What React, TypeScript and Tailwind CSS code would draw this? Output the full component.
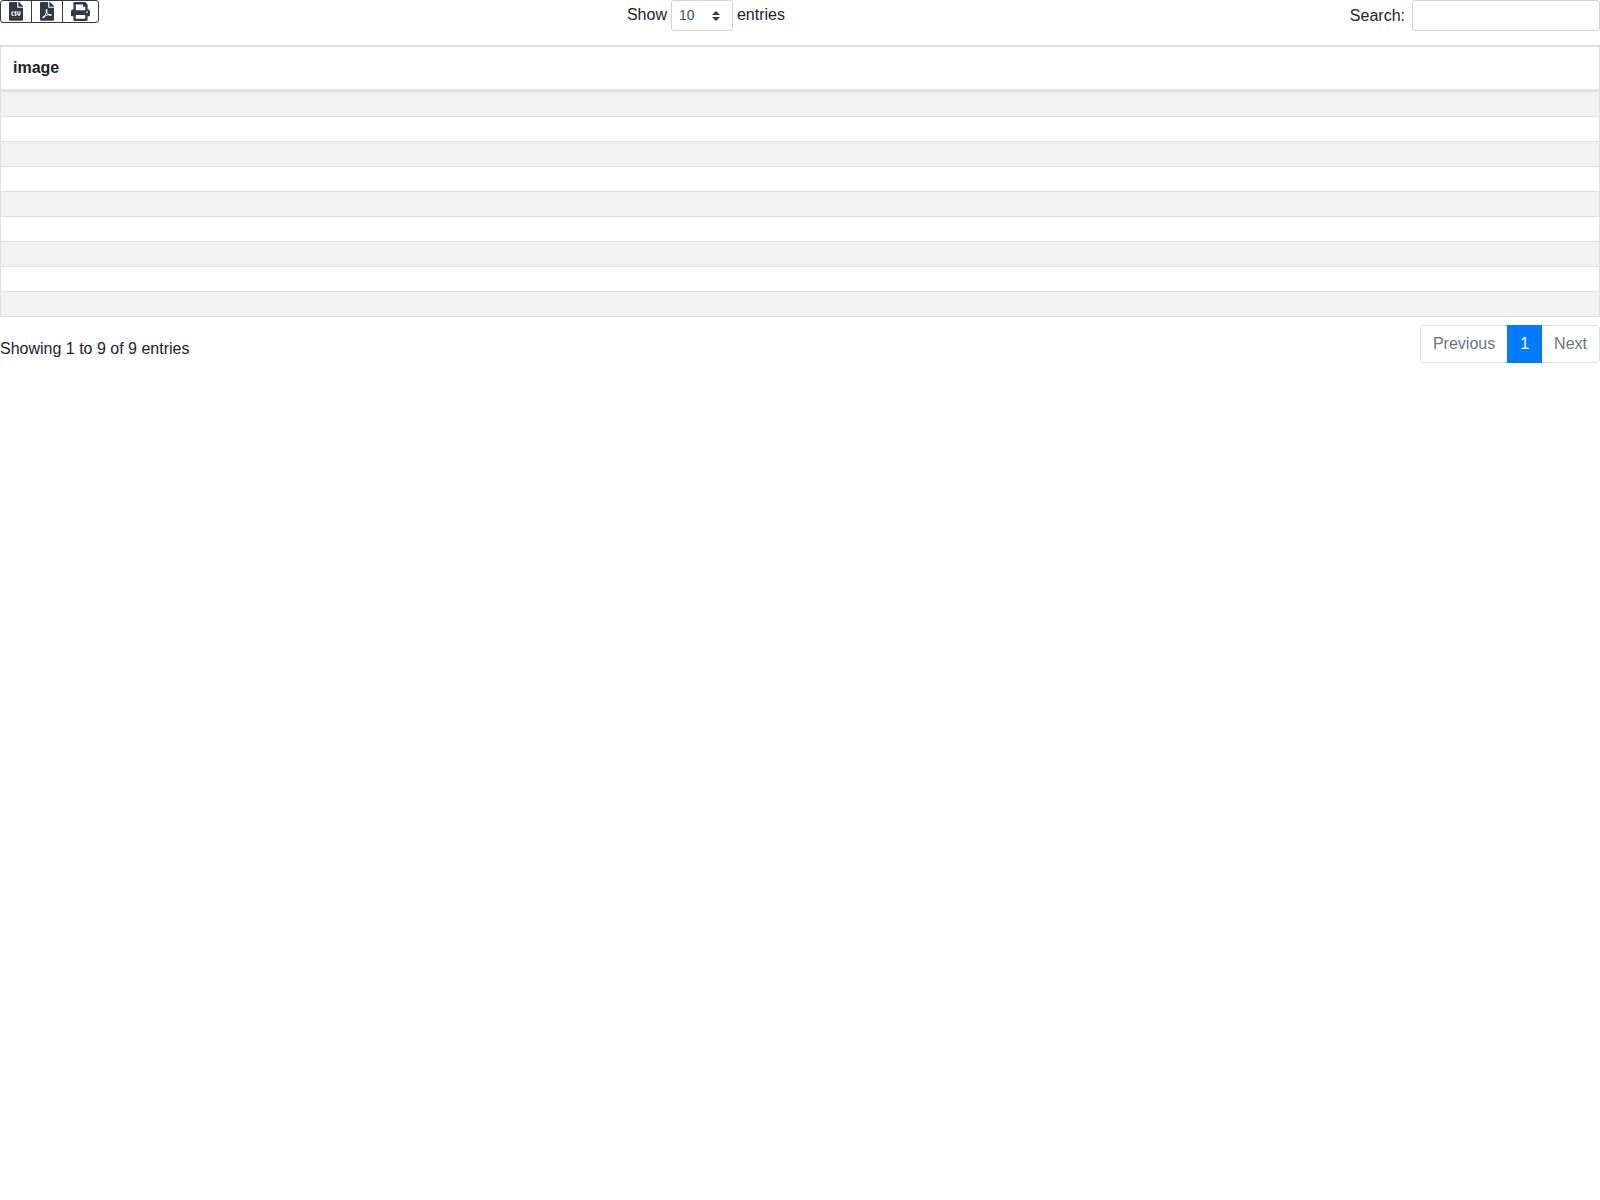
import React, { useState } from 'react';
import { FaFileCsv, FaFilePdf, FaPrint } from 'react-icons/fa';

const images: string[] = ['', '', '', '', '', '', '', '', ''];

const App: React.FC = () => {
  const [search, setSearch] = useState<string>('');
  const [pageSize, setPageSize] = useState<string>('10');

  const filteredImages = images.filter(image => image.includes(search));

  return (
    <div className="w-full bg-white font-['Liberation_Sans',Arial,sans-serif] text-base text-[#212529]">
      <div className="grid grid-cols-[10fr_auto_13fr] items-start">
        <div className="flex text-[#343a40]">
          <button type="button" aria-label="CSV" className="flex h-[23px] items-start rounded-l-[3px] border border-[#343a40] px-2 pt-px">
            <FaFileCsv preserveAspectRatio="xMidYMin" className="h-[19px] w-[14px]" />
          </button>
          <button type="button" aria-label="PDF" className="-ml-px flex h-[23px] items-start border border-[#343a40] px-2 pt-px">
            <FaFilePdf preserveAspectRatio="xMidYMin" className="h-[19px] w-[14px]" />
          </button>
          <button type="button" aria-label="Print" className="-ml-px flex h-[23px] items-start rounded-r-[3px] border border-[#343a40] px-2 pt-px">
            <FaPrint className="h-[19px] w-[19px]" />
          </button>
        </div>

        <div className="flex items-start gap-1">
          <label htmlFor="pageSize" className="pt-[3px]">Show</label>
          <div className="relative">
            <select
              id="pageSize"
              value={pageSize}
              onChange={(e) => setPageSize(e.target.value)}
              className="block h-[31px] w-[62px] appearance-none rounded-[3px] border border-[#ced4da] bg-white pr-6 pb-[2px] pl-[7px] text-sm text-[#495057]"
            >
              <option value="10">10</option>
              <option value="25">25</option>
              <option value="50">50</option>
              <option value="100">100</option>
            </select>
            <svg viewBox="0 0 4 5" className="pointer-events-none absolute top-[11px] right-[13px] h-[10px] w-[8px]">
              <path fill="#343a40" d="M2 0L0 2h4zm0 5L0 3h4z" />
            </svg>
          </div>
          <span className="pt-[3px]">entries</span>
        </div>

        <div className="flex items-center justify-end gap-[7px]">
          <label htmlFor="search">Search:</label>
          <input
            id="search"
            type="search"
            value={search}
            onChange={(e) => setSearch(e.target.value)}
            className="h-[31px] w-[188px] rounded-[3px] border border-[#ced4da] bg-white px-2 text-sm text-[#495057]"
          />
        </div>
      </div>

      <table className="mt-[14px] w-full border-separate border-spacing-0 border-t border-l border-[#dee2e6]">
        <thead>
          <tr>
            <th className="border-t border-r border-b-2 border-[#dee2e6] px-3 py-[9px] text-left font-bold">image</th>
          </tr>
        </thead>
        <tbody>
          <tr className="h-[26px] bg-[#f2f2f2]">
            <td className="border-t border-r border-b border-[#dee2e6]">{filteredImages[0]}</td>
          </tr>
          {filteredImages.slice(1).map((image, index) => (
            <tr key={index} className="h-[25px] even:bg-white odd:bg-[#f2f2f2]">
              <td className="border-r border-b border-[#dee2e6]">{image}</td>
            </tr>
          ))}
        </tbody>
      </table>

      <div className="flex items-start justify-between pt-2">
        <p className="pt-3">Showing 1 to {filteredImages.length} of {images.length} entries</p>
        <nav aria-label="Pagination" className="flex text-[#6c757d]">
          <a href="#" className="rounded-l border border-[#dee2e6] px-3 py-[6px]">Previous</a>
          <a href="#" aria-current="page" className="z-10 -ml-px border border-[#007bff] bg-[#007bff] px-3 py-[6px] text-white">1</a>
          <a href="#" className="-ml-px rounded-r border border-[#dee2e6] px-3 py-[6px]">Next</a>
        </nav>
      </div>
    </div>
  );
};

export default App;
